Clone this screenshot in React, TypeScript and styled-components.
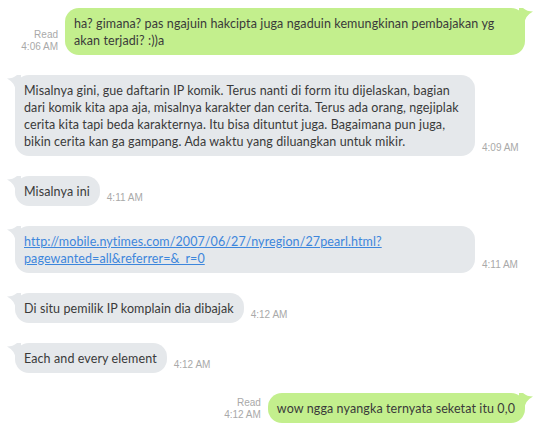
import React from "react";
import styled, { createGlobalStyle } from "styled-components";

const Global = createGlobalStyle`
  html, body { margin: 0; padding: 0; background: #ffffff; }
  body { width: 540px; height: 433px; overflow: hidden; }
`;

const Page = styled.div`
  display: flex;
  flex-direction: column;
  gap: 20px;
  padding: 8px 15px 0 15px;
  box-sizing: border-box;
  width: 540px;
`;

const Row = styled.div<{ $sent?: boolean }>`
  display: flex;
  align-items: flex-end;
  justify-content: ${(p) => (p.$sent ? "flex-end" : "flex-start")};
  gap: 7px;
`;

const Bubble = styled.div<{ $sent?: boolean; $wide?: boolean }>`
  position: relative;
  box-sizing: border-box;
  ${(p) => (p.$wide ? "width: 460px;" : "max-width: 460px;")}
  padding: 6.5px 10px 6.5px 9px;
  border-radius: 14px;
  background: ${(p) => (p.$sent ? "#c3ef8d" : "#e5e8eb")};
  color: #3a3a3a;
  font-family: "Lato", "Open Sans", sans-serif;
  font-size: 12.5px;
  line-height: 17px;
  letter-spacing: 0.1px;
  white-space: pre;
`;

const TailSvg = styled.svg<{ $sent?: boolean }>`
  position: absolute;
  top: 0;
  width: 14px;
  height: 16px;
  ${(p) => (p.$sent ? "right: -8px; transform: scaleX(-1);" : "left: -8px;")}
`;

const Meta = styled.div`
  display: flex;
  flex-direction: column;
  align-items: flex-end;
  font-family: "Liberation Sans", Arial, sans-serif;
  font-size: 10px;
  line-height: 12px;
  color: #a9a9a9;
  padding-bottom: 2px;
`;

const Time = styled.div`
  font-family: "Liberation Sans", Arial, sans-serif;
  font-size: 10px;
  line-height: 12px;
  color: #a9a9a9;
  padding-bottom: 2px;
  white-space: nowrap;
`;

const Link = styled.a`
  color: #3d86dc;
  text-decoration: underline;
`;

const Tail: React.FC<{ sent?: boolean }> = ({ sent }) => (
  <TailSvg $sent={sent} viewBox="0 0 14 16">
    <path
      d="M0,3.5 Q6,3.5 10,0 L14,0 L14,16 L8.5,16 Q8.5,8 0,3.5 Z"
      fill={sent ? "#c3ef8d" : "#e5e8eb"}
    />
  </TailSvg>
);

type Msg = { sent: boolean; text: React.ReactNode; time: string; wide?: boolean };

const messages: Msg[] = [
  {
    sent: true,
    wide: true,
    time: "4:06 AM",
    text: "ha? gimana? pas ngajuin hakcipta juga ngaduin kemungkinan pembajakan yg\nakan terjadi? :))a",
  },
  {
    sent: false,
    wide: true,
    time: "4:09 AM",
    text:
      "Misalnya gini, gue daftarin IP komik. Terus nanti di form itu dijelaskan, bagian\ndari komik kita apa aja, misalnya karakter dan cerita. Terus ada orang, ngejiplak\ncerita kita tapi beda karakternya. Itu bisa dituntut juga. Bagaimana pun juga,\nbikin cerita kan ga gampang. Ada waktu yang diluangkan untuk mikir.",
  },
  { sent: false, time: "4:11 AM", text: "Misalnya ini" },
  {
    sent: false,
    wide: true,
    time: "4:11 AM",
    text: (
      <Link href="#">
        {"http://mobile.nytimes.com/2007/06/27/nyregion/27pearl.html?\npagewanted=all&referrer=&_r=0"}
      </Link>
    ),
  },
  { sent: false, time: "4:12 AM", text: "Di situ pemilik IP komplain dia dibajak" },
  { sent: false, time: "4:12 AM", text: "Each and every element" },
  { sent: true, time: "4:12 AM", text: "wow ngga nyangka ternyata seketat itu 0,0" },
];

export default function App() {
  return (
    <>
      <Global />
      <Page>
        {messages.map((m, i) =>
          m.sent ? (
            <Row key={i} $sent>
              <Meta>
                <span>Read</span>
                <span>{m.time}</span>
              </Meta>
              <Bubble $sent $wide={m.wide}>
                <Tail sent />
                {m.text}
              </Bubble>
            </Row>
          ) : (
            <Row key={i}>
              <Bubble $wide={m.wide}>
                <Tail />
                {m.text}
              </Bubble>
              <Time>{m.time}</Time>
            </Row>
          )
        )}
      </Page>
    </>
  );
}
